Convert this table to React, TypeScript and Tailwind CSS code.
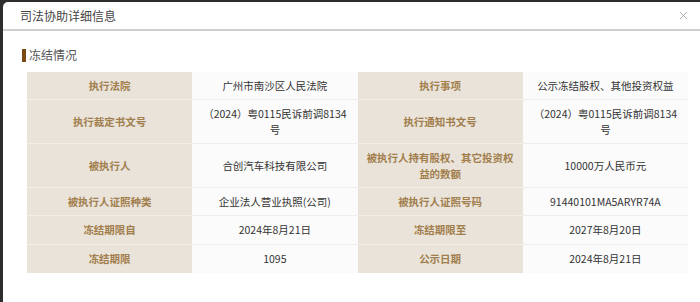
import { X } from "lucide-react";

const rows: { h: string; cells: [string, string, string, string] }[] = [
  { h: "h-[27px]", cells: ["执行法院", "广州市南沙区人民法院", "执行事项", "公示冻结股权、其他投资权益"] },
  {
    h: "h-[43px]",
    cells: ["执行裁定书文号", "（2024）粤0115民诉前调8134号", "执行通知书文号", "（2024）粤0115民诉前调8134号"],
  },
  {
    h: "h-[43px]",
    cells: ["被执行人", "合创汽车科技有限公司", "被执行人持有股权、其它投资权益的数额", "10000万人民币元"],
  },
  { h: "h-[27px]", cells: ["被执行人证照种类", "企业法人营业执照(公司)", "被执行人证照号码", "91440101MA5ARYR74A"] },
  { h: "h-[28px]", cells: ["冻结期限自", "2024年8月21日", "冻结期限至", "2027年8月20日"] },
  { h: "h-[28px]", cells: ["冻结期限", "1095", "公示日期", "2024年8月21日"] },
];

const Label = ({ text }: { text: string }) => (
  <div className="bg-[#e9e3da] flex items-center justify-center text-center px-[8px] font-bold text-[#a17e4c] leading-[16px]">
    {text}
  </div>
);

const Value = ({ text }: { text: string }) => (
  <div className="bg-[#fbfbfb] flex items-center justify-center text-center px-[10px] text-[#333] leading-[16px]">
    {text}
  </div>
);

const App = () => {
  return (
    <div
      className="w-[700px] h-[302px] bg-[#2e2e2e] pl-[3px] pt-[2px] flex overflow-hidden"
      style={{ fontFamily: '"Noto Sans CJK SC", "Noto Sans", sans-serif' }}
    >
      <div className="flex-1 bg-white rounded-tl-[5px] flex flex-col">
        <div className="h-[29px] flex items-center justify-between pl-[17px] pr-[10px] border-b-2 border-[#cfcfcf] text-[12px] text-[#444]">
          <span>司法协助详细信息</span>
          <X className="w-[13px] h-[13px] text-[#888]" strokeWidth={1.2} />
        </div>
        <div className="pl-[19px] pt-[15px] flex items-center gap-[3px]">
          <span className="w-[4px] h-[13px] bg-[#7a4a12]" />
          <span className="text-[12px] text-[#555] leading-[18px]">冻结情况</span>
        </div>
        <div className="ml-[24px] mt-[8px] w-[661px] flex flex-col text-[10.5px] gap-y-px bg-[#f1eee9]">
          {rows.map((r, i) => (
            <div key={i} className={`grid grid-cols-4 ${r.h}`}>
              <Label text={r.cells[0]} />
              <Value text={r.cells[1]} />
              <Label text={r.cells[2]} />
              <Value text={r.cells[3]} />
            </div>
          ))}
        </div>
      </div>
    </div>
  );
};

export default App;
